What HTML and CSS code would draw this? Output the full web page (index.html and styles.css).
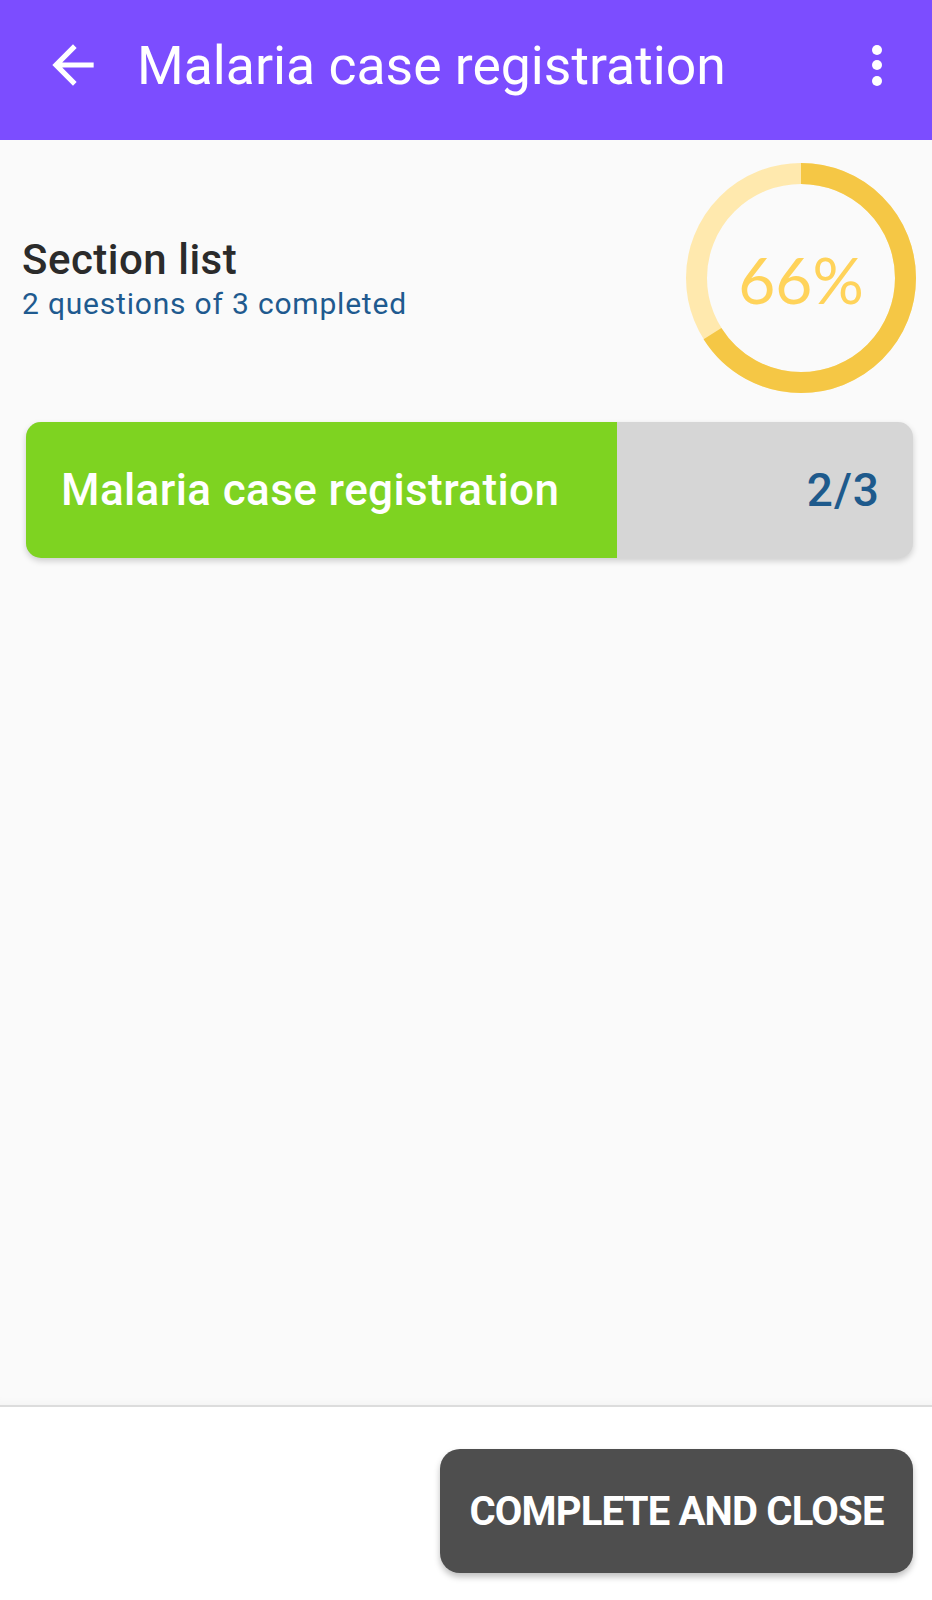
FILE: index.html
```html
<!DOCTYPE html>
<html lang="en">
<head>
<meta charset="utf-8">
<title>Malaria case registration</title>
<link rel="stylesheet" href="styles.css">
</head>
<body>
<div class="screen">
  <header class="appbar">
    <svg class="icon-back" viewBox="0 0 24 24" width="62" height="62"><path fill="#fff" d="M20 11H7.83l5.59-5.59L12 4l-8 8 8 8 1.41-1.41L7.83 13H20v-2z"/></svg>
    <h1 class="appbar-title">Malaria case registration</h1>
    <div class="kebab"><span></span><span></span><span></span></div>
  </header>
  <main class="content">
    <div class="summary">
      <div class="summary-text">
        <div class="summary-title">Section list</div>
        <div class="summary-sub">2 questions of 3 completed</div>
      </div>
      <div class="ring">
        <svg viewBox="0 0 230 230" width="230" height="230">
          <circle cx="115" cy="115" r="104.5" fill="none" stroke="#FFE9AE" stroke-width="21"/>
          <circle cx="115" cy="115" r="104.5" fill="none" stroke="#F5C745" stroke-width="21" stroke-dasharray="433.4 1000" transform="rotate(-90 115 115)"/>
        </svg>
        <span class="ring-label">66%</span>
      </div>
    </div>
    <div class="section-card">
      <div class="section-fill" style="width:66.6%"></div>
      <span class="section-name">Malaria case registration</span>
      <span class="section-count">2/3</span>
    </div>
  </main>
  <footer class="bottombar">
    <button class="btn-complete">COMPLETE AND CLOSE</button>
  </footer>
</div>
</body>
</html>
```

FILE: styles.css
```css
html, body {
  margin: 0;
  padding: 0;
}
body {
  background: #ffffff;
  font-family: Roboto, "Noto Sans", sans-serif;
}
.screen {
  width: 932px;
  height: 1600px;
  display: flex;
  flex-direction: column;
  overflow: hidden;
}
.appbar {
  height: 140px;
  flex: none;
  background: #7C4DFF;
  display: flex;
  align-items: center;
  box-sizing: border-box;
  padding: 0 0 10px 42px;
}
.icon-back {
  flex: none;
  display: block;
}
.appbar-title {
  margin: 0 0 0 33px;
  color: #fff;
  font-weight: 400;
  font-size: 53.5px;
  letter-spacing: 0;
  flex: 1;
}
.kebab {
  width: 10px;
  display: flex;
  flex-direction: column;
  gap: 5.5px;
  margin-right: 50px;
}
.kebab span {
  width: 10px;
  height: 10px;
  border-radius: 50%;
  background: #fff;
}
.content {
  flex: 1;
  background: #FAFAFA;
  padding: 23px 19px 0 26px;
  box-shadow: inset 0 -10px 10px -8px rgba(0,0,0,0.03);
}
.summary {
  display: flex;
  align-items: center;
  justify-content: space-between;
  margin-right: -3px;
}
.summary-text {
  margin-left: -4px;
  margin-top: 4px;
}
.summary-title {
  font-size: 42px;
  font-weight: 500;
  color: #2B2B2B;
  line-height: 48px;
  letter-spacing: 0.5px;
}
.summary-sub {
  font-size: 30px;
  color: #1F5A8F;
  line-height: 40px;
  letter-spacing: 0.8px;
}
.ring {
  position: relative;
  width: 230px;
  height: 230px;
}
.ring svg {
  display: block;
}
.ring-label {
  position: absolute;
  inset: 0;
  display: flex;
  align-items: center;
  justify-content: center;
  font-family: Lato, Roboto, sans-serif;
  font-weight: 400;
  font-size: 64px;
  color: #FFD35A;
  padding-top: 2px;
}
.section-card {
  position: relative;
  margin-top: 29px;
  height: 136px;
  border-radius: 15px;
  background: #D6D6D6;
  overflow: hidden;
  display: flex;
  align-items: center;
  justify-content: space-between;
  padding: 0 33px 0 35px;
  box-shadow: 0 3px 6px rgba(0,0,0,0.18);
}
.section-fill {
  position: absolute;
  left: 0;
  top: 0;
  bottom: 0;
  background: #7ED321;
}
.section-name {
  position: relative;
  color: #fff;
  font-size: 44px;
  font-weight: 500;
  letter-spacing: 0.4px;
}
.section-count {
  position: relative;
  color: #1E5A8C;
  font-size: 46px;
  font-weight: 500;
  letter-spacing: 1px;
}
.bottombar {
  height: 195px;
  flex: none;
  background: #fff;
  border-top: 2px solid #DCDCDC;
  box-sizing: border-box;
  display: flex;
  justify-content: flex-end;
  align-items: flex-start;
  padding: 42px 19px 0 0;
}
.btn-complete {
  width: 473px;
  height: 124px;
  border: none;
  border-radius: 20px;
  background: #4E4E4E;
  color: #fff;
  font-family: Roboto, sans-serif;
  font-weight: 700;
  font-size: 40px;
  letter-spacing: -0.8px;
  box-shadow: 0 4px 6px rgba(0,0,0,0.25);
  padding: 0;
}
```
